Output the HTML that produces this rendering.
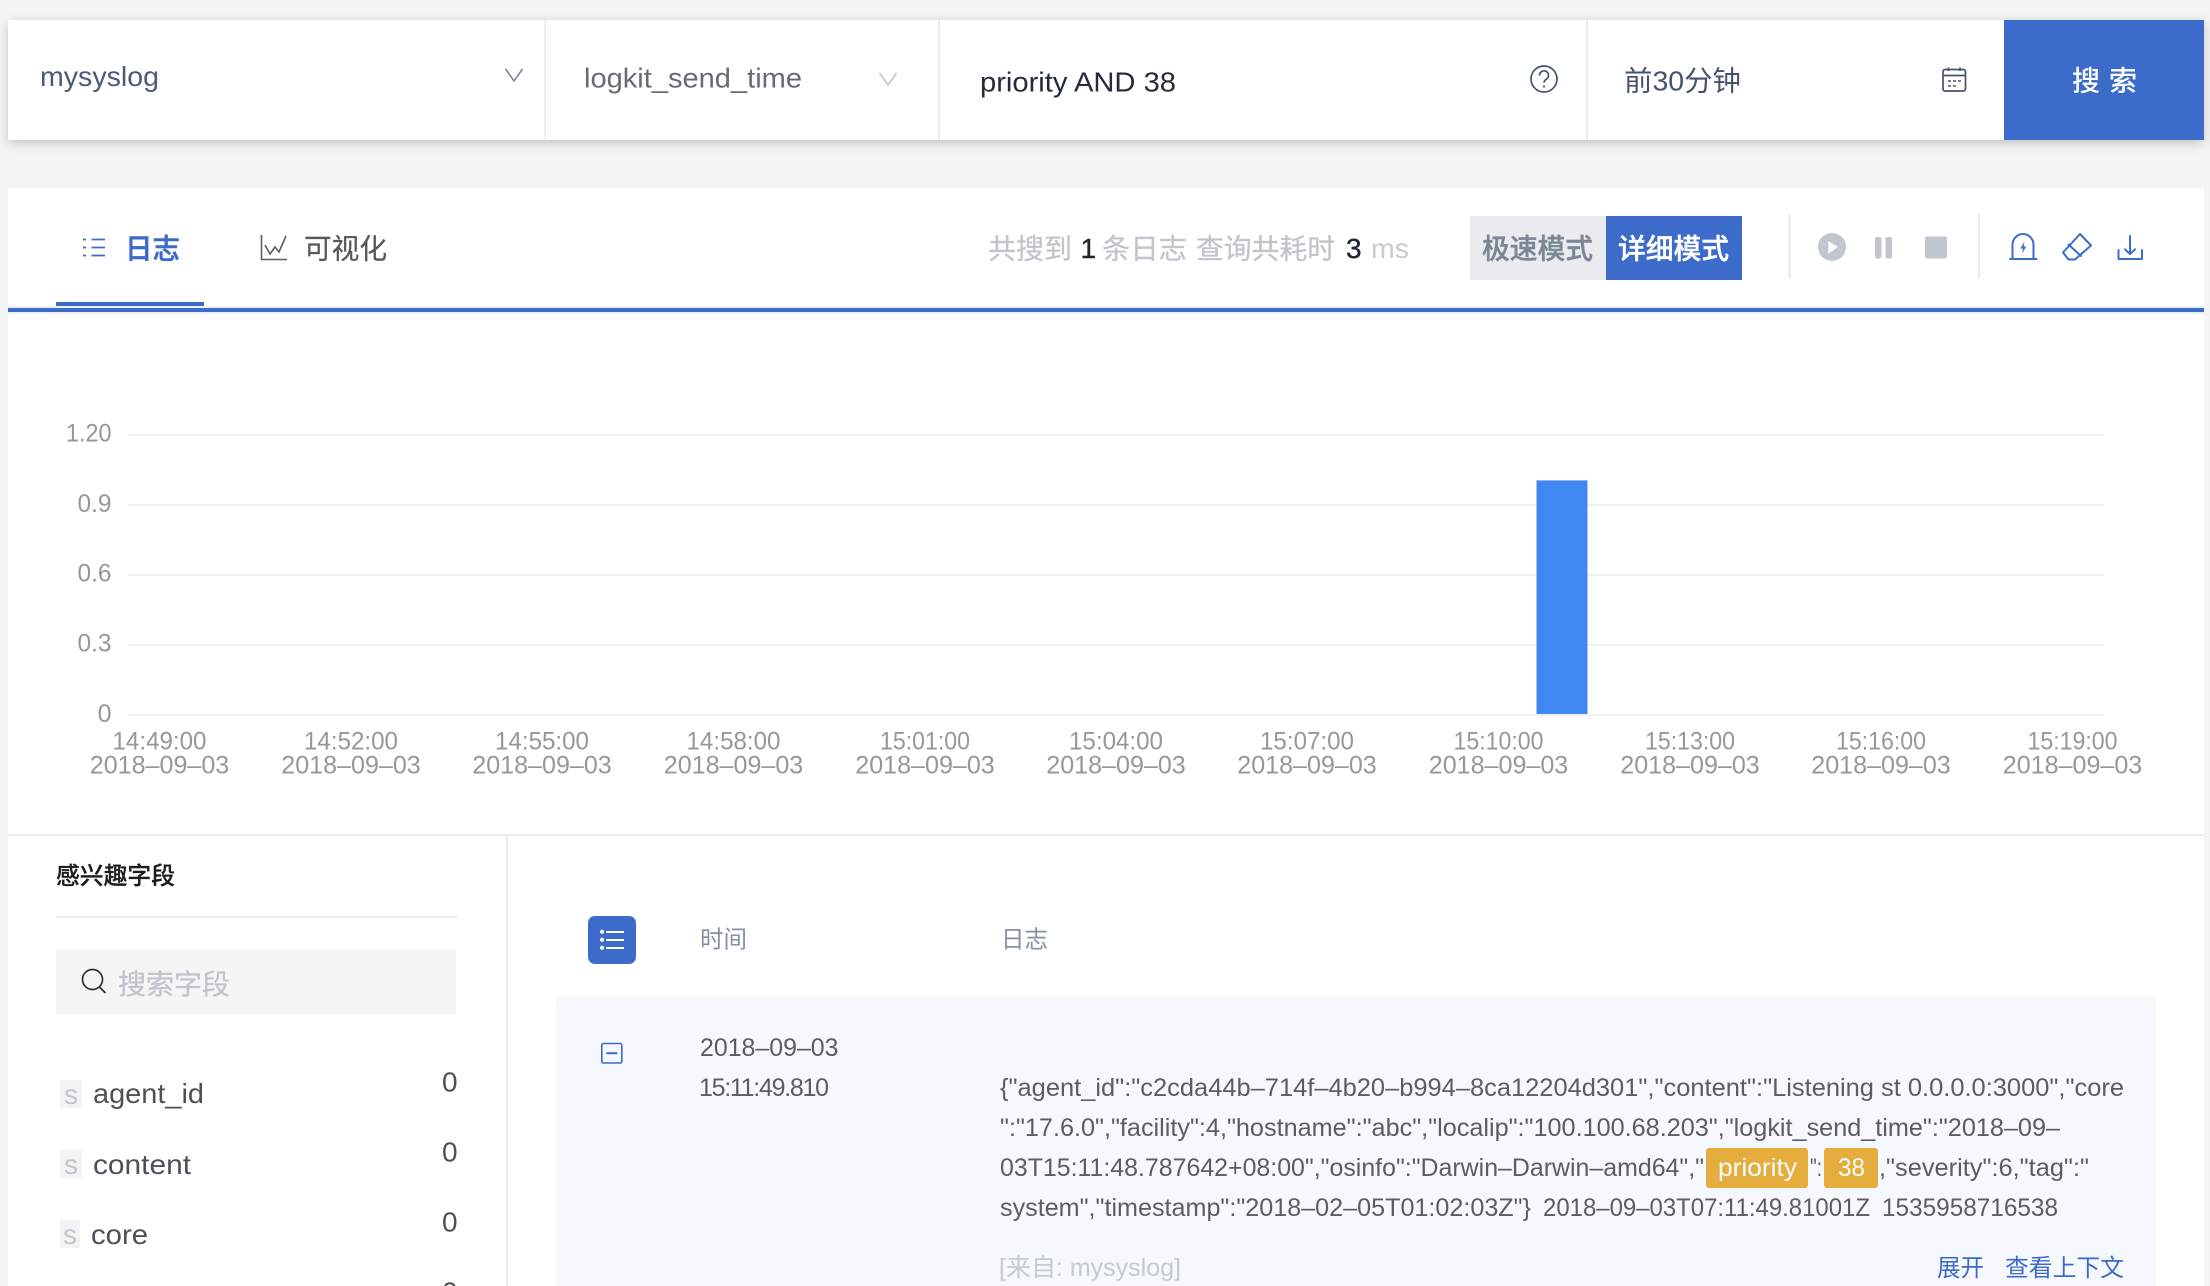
<!DOCTYPE html>
<html lang="zh">
<head>
<meta charset="utf-8">
<title>日志搜索</title>
<style>
html,body{margin:0;padding:0;width:2210px;height:1286px;overflow:hidden;background:#f4f5f7}
svg{display:block;position:absolute;left:0;top:0}
text{font-family:"Liberation Sans","Noto Sans CJK SC",sans-serif;white-space:pre}
.ax{font-size:25px;fill:#979797}
.log{font-size:25px;fill:#5a5d64}
.cn{font-size:28px}
.fld{font-size:28px;fill:#4c5058}
.s{font-size:28px;fill:#c0c5ce}
.ic{fill:none;stroke:#3d6bc9;stroke-width:2;stroke-linecap:round;stroke-linejoin:round}
</style>
</head>
<body>
<svg width="2210" height="1286" viewBox="0 0 2210 1286" xmlns="http://www.w3.org/2000/svg">
<defs>
<filter id="sh" x="-5%" y="-20%" width="110%" height="150%"><feDropShadow dx="0" dy="3" stdDeviation="6" flood-color="#000" flood-opacity=".22"/></filter>
</defs>

<!-- search bar -->
<rect x="8" y="20" width="2196" height="120" fill="#fff" filter="url(#sh)"/>
<rect x="2004" y="20" width="200" height="120" fill="#3d6bc9"/>
<rect x="544.5" y="20" width="1.5" height="120" fill="#e6e8eb"/>
<rect x="938.5" y="20" width="1.5" height="120" fill="#e6e8eb"/>
<rect x="1586.5" y="20" width="1.5" height="120" fill="#e6e8eb"/>

<text x="40" y="86" font-size="28" fill="#4a5a78" textLength="119" lengthAdjust="spacingAndGlyphs">mysyslog</text>
<polyline points="505.5,69 514,81 522.5,69" fill="none" stroke="#7a869a" stroke-width="1.6"/>
<text x="584" y="87.5" font-size="28" fill="#666b75" textLength="218" lengthAdjust="spacingAndGlyphs">logkit_send_time</text>
<polyline points="879.5,73 888,85 896.5,73" fill="none" stroke="#c0c4cc" stroke-width="1.6"/>
<text x="980" y="91.5" font-size="28" fill="#252b3a" textLength="196" lengthAdjust="spacingAndGlyphs">priority AND 38</text>

<circle cx="1544" cy="79" r="13" fill="none" stroke="#45536e" stroke-width="1.7"/>
<path d="M1539.5 75.5a4.5 4.5 0 1 1 7 3.6c-1.6 1.1-2.5 1.9-2.5 3.6" fill="none" stroke="#45536e" stroke-width="1.7"/>
<circle cx="1544" cy="86.5" r="1.1" fill="#45536e"/>

<text x="1624" y="90.5" font-size="28" fill="#45536e" textLength="117" lengthAdjust="spacingAndGlyphs">前30分钟</text>
<g fill="none" stroke="#45536e" stroke-width="1.7">
<rect x="1943" y="69.5" width="22.5" height="21.5" rx="2"/>
<path d="M1943 75.5H1965.5M1948.5 67.5V71M1960 67.5V71"/>
<path d="M1948 81h3M1953 81h3M1958 81h3M1948 86h3M1953 86h3" stroke-width="1.4"/>
</g>
<text x="2072" y="90.6" font-size="28" font-weight="500" fill="#fff" letter-spacing="9">搜索</text>

<!-- main panel -->
<rect x="8" y="188" width="2196" height="1098" fill="#fff"/>
<rect x="8" y="306" width="2196" height="8" fill="#eceef2"/>
<rect x="8" y="308" width="2196" height="4" fill="#3d6bc9"/>
<rect x="56" y="302" width="148" height="4" fill="#3d6bc9"/>

<g fill="none" stroke="#3d6bc9" stroke-width="1.8">
<path d="M83 239.5h3M91.5 239.5H105M83 247.5h3M91.5 247.5H105M83 255.5h3M91.5 255.5H105"/>
</g>
<text x="125" y="258.6" class="cn" font-weight="500" fill="#3d6bc9" stroke="#3d6bc9" stroke-width=".5" textLength="55" lengthAdjust="spacingAndGlyphs">日志</text>
<g fill="none" stroke="#5a5d64" stroke-width="1.6">
<path d="M261.5 235V259.5H287"/>
<polyline points="265,245 270,254 275,247 279,252 286,236"/>
</g>
<text x="304" y="258.6" class="cn" fill="#55585f" stroke="#55585f" stroke-width=".25" textLength="83" lengthAdjust="spacingAndGlyphs">可视化</text>

<text x="988" y="258.6" class="cn" fill="#c0c4cc" stroke="#c0c4cc" stroke-width=".3" textLength="84" lengthAdjust="spacingAndGlyphs">共搜到</text>
<text x="1080.5" y="258" class="cn" fill="#1f2533" stroke="#1f2533" stroke-width=".4">1</text>
<text x="1102" y="258.6" class="cn" fill="#c0c4cc" stroke="#c0c4cc" stroke-width=".3" textLength="85" lengthAdjust="spacingAndGlyphs">条日志</text>
<text x="1196" y="258.6" class="cn" fill="#c0c4cc" stroke="#c0c4cc" stroke-width=".3" textLength="139" lengthAdjust="spacingAndGlyphs">查询共耗时</text>
<text x="1346" y="258" class="cn" fill="#1f2533" stroke="#1f2533" stroke-width=".4">3</text>
<text x="1371" y="258" class="cn" fill="#c6cad1" textLength="38" lengthAdjust="spacingAndGlyphs">ms</text>

<rect x="1470" y="216" width="136" height="64" fill="#e9ebef"/>
<rect x="1606" y="216" width="136" height="64" fill="#3d6bc9"/>
<text x="1482" y="258.6" class="cn" font-weight="500" fill="#7d8694" stroke="#7d8694" stroke-width=".4" textLength="111" lengthAdjust="spacingAndGlyphs">极速模式</text>
<text x="1618" y="258.6" class="cn" font-weight="500" fill="#fff" stroke="#fff" stroke-width=".4" textLength="111" lengthAdjust="spacingAndGlyphs">详细模式</text>

<rect x="1788.5" y="214" width="2" height="64" fill="#e8e9ec"/>
<rect x="1978" y="214" width="2" height="64" fill="#e8e9ec"/>
<circle cx="1832" cy="247" r="14" fill="#c0c5ce"/>
<polygon points="1828.3,241 1838,247 1828.3,253.5" fill="#fff"/>
<rect x="1875" y="237" width="6.5" height="21.5" rx="2" fill="#c0c5ce"/>
<rect x="1885.5" y="237" width="6.5" height="21.5" rx="2" fill="#c0c5ce"/>
<rect x="1925" y="236.5" width="22" height="22" rx="2" fill="#c0c5ce"/>

<g class="ic">
<path d="M2012.5 259V245a10.5 11 0 0 1 21 0V259"/>
<path d="M2010 259H2036.5"/>
<path d="M2080 234L2091 245.5L2075 259.5H2068.5L2063 252.5Z"/>
<path d="M2068.5 244.5L2081 256"/>
<path d="M2130 236V254M2125 249.3L2130 254L2135 249.3"/>
<path d="M2118.5 250V259H2142V250"/>
</g>
<polygon points="2024.5,241.5 2020.3,248.5 2023,248.5 2022,253.5 2026.3,246.5 2023.6,246.5" fill="#3d6bc9"/>

<!-- chart -->
<g fill="#eff0f2">
<rect x="128" y="434" width="1976" height="2"/>
<rect x="128" y="504" width="1976" height="2"/>
<rect x="128" y="574" width="1976" height="2"/>
<rect x="128" y="644" width="1976" height="2"/>
<rect x="128" y="714" width="1976" height="2"/>
</g>
<rect x="1536.5" y="481" width="51" height="233" fill="#4087f1"/>
<rect x="1536.5" y="480" width="51" height="1" fill="#8fb9f6"/>
<g text-anchor="end" class="ax">
<text x="111.5" y="441.5" textLength="45.5" lengthAdjust="spacingAndGlyphs">1.20</text>
<text x="111.5" y="512" textLength="34" lengthAdjust="spacingAndGlyphs">0.9</text>
<text x="111.5" y="581.5" textLength="34" lengthAdjust="spacingAndGlyphs">0.6</text>
<text x="111.5" y="651.5" textLength="34" lengthAdjust="spacingAndGlyphs">0.3</text>
<text x="111.5" y="722">0</text>
</g>
<g text-anchor="middle" class="ax">
<text x="159.5" y="749.5" textLength="94" lengthAdjust="spacingAndGlyphs">14:49:00</text><text x="159.5" y="773.5" textLength="139.5" lengthAdjust="spacingAndGlyphs">2018–09–03</text>
<text x="351" y="749.5" textLength="94" lengthAdjust="spacingAndGlyphs">14:52:00</text><text x="351" y="773.5" textLength="139.5" lengthAdjust="spacingAndGlyphs">2018–09–03</text>
<text x="542" y="749.5" textLength="94" lengthAdjust="spacingAndGlyphs">14:55:00</text><text x="542" y="773.5" textLength="139.5" lengthAdjust="spacingAndGlyphs">2018–09–03</text>
<text x="733.5" y="749.5" textLength="94" lengthAdjust="spacingAndGlyphs">14:58:00</text><text x="733.5" y="773.5" textLength="139.5" lengthAdjust="spacingAndGlyphs">2018–09–03</text>
<text x="925" y="749.5" textLength="90" lengthAdjust="spacingAndGlyphs">15:01:00</text><text x="925" y="773.5" textLength="139.5" lengthAdjust="spacingAndGlyphs">2018–09–03</text>
<text x="1116" y="749.5" textLength="94" lengthAdjust="spacingAndGlyphs">15:04:00</text><text x="1116" y="773.5" textLength="139.5" lengthAdjust="spacingAndGlyphs">2018–09–03</text>
<text x="1307" y="749.5" textLength="94" lengthAdjust="spacingAndGlyphs">15:07:00</text><text x="1307" y="773.5" textLength="139.5" lengthAdjust="spacingAndGlyphs">2018–09–03</text>
<text x="1498.5" y="749.5" textLength="90" lengthAdjust="spacingAndGlyphs">15:10:00</text><text x="1498.5" y="773.5" textLength="139.5" lengthAdjust="spacingAndGlyphs">2018–09–03</text>
<text x="1690" y="749.5" textLength="90" lengthAdjust="spacingAndGlyphs">15:13:00</text><text x="1690" y="773.5" textLength="139.5" lengthAdjust="spacingAndGlyphs">2018–09–03</text>
<text x="1881" y="749.5" textLength="90" lengthAdjust="spacingAndGlyphs">15:16:00</text><text x="1881" y="773.5" textLength="139.5" lengthAdjust="spacingAndGlyphs">2018–09–03</text>
<text x="2072.5" y="749.5" textLength="90" lengthAdjust="spacingAndGlyphs">15:19:00</text><text x="2072.5" y="773.5" textLength="139.5" lengthAdjust="spacingAndGlyphs">2018–09–03</text>
</g>

<rect x="8" y="834" width="2196" height="2" fill="#ecedf1"/>
<rect x="506" y="836" width="2" height="450" fill="#ecedf1"/>

<!-- sidebar -->
<text x="56" y="884" font-size="24" font-weight="500" fill="#1c1d20" stroke="#1c1d20" stroke-width=".25" textLength="119" lengthAdjust="spacingAndGlyphs">感兴趣字段</text>
<rect x="56" y="916" width="402" height="2" fill="#eceef1"/>
<rect x="56" y="950" width="400" height="64" fill="#f4f5f7"/>
<circle cx="92.5" cy="979.5" r="10" fill="none" stroke="#2a2f3a" stroke-width="1.7"/>
<path d="M99.5 987L105.5 993" fill="none" stroke="#2a2f3a" stroke-width="1.7"/>
<text x="118" y="994" class="cn" fill="#c0c4cc" stroke="#c0c4cc" stroke-width=".3" textLength="112" lengthAdjust="spacingAndGlyphs">搜索字段</text>

<rect x="60" y="1080" width="22" height="28" fill="#f2f3f5"/>
<text x="64" y="1104" class="s">s</text>
<text x="93" y="1103" class="fld" textLength="111" lengthAdjust="spacingAndGlyphs">agent_id</text>
<text x="442" y="1091.5" class="fld">0</text>
<rect x="60" y="1150" width="22" height="28" fill="#f2f3f5"/>
<text x="64" y="1174" class="s">s</text>
<text x="93" y="1174" class="fld" textLength="98" lengthAdjust="spacingAndGlyphs">content</text>
<text x="442" y="1161.5" class="fld">0</text>
<rect x="60" y="1220" width="20" height="28" fill="#f2f3f5"/>
<text x="63" y="1244" class="s">s</text>
<text x="91" y="1244" class="fld" textLength="57" lengthAdjust="spacingAndGlyphs">core</text>
<text x="442" y="1231.5" class="fld">0</text>
<text x="442" y="1301.5" class="fld">0</text>

<!-- table header -->
<rect x="588" y="916" width="48" height="48" rx="7" fill="#3d6bc9"/>
<g fill="#fff"><circle cx="602" cy="931.8" r="2"/><circle cx="602" cy="939.8" r="2"/><circle cx="602" cy="947.8" r="2"/></g>
<path d="M606 932H624M606 940H624M606 948H624" fill="none" stroke="#fff" stroke-width="2"/>
<text x="700" y="947.5" font-size="24" fill="#8590a0" textLength="47" lengthAdjust="spacingAndGlyphs">时间</text>
<text x="1001" y="947.5" font-size="24" fill="#8590a0" textLength="47" lengthAdjust="spacingAndGlyphs">日志</text>

<!-- log row -->
<rect x="556" y="996" width="1600" height="290" fill="#f5f8fd"/>
<rect x="601.8" y="1043.5" width="20" height="19.5" rx="1.5" fill="none" stroke="#3d6bc9" stroke-width="1.6"/>
<path d="M606.3 1053.2H617.3" fill="none" stroke="#3d6bc9" stroke-width="2"/>
<text x="700" y="1056" class="log" textLength="138.5" lengthAdjust="spacingAndGlyphs">2018–09–03</text>
<text x="699" y="1096" class="log" textLength="130" lengthAdjust="spacing">15:11:49.810</text>

<text x="1000" y="1096" class="log" textLength="1124" lengthAdjust="spacingAndGlyphs">{"agent_id":"c2cda44b–714f–4b20–b994–8ca12204d301","content":"Listening st 0.0.0.0:3000","core</text>
<text x="1000" y="1136" class="log" textLength="1060" lengthAdjust="spacingAndGlyphs">":"17.6.0","facility":4,"hostname":"abc","localip":"100.100.68.203","logkit_send_time":"2018–09–</text>
<text x="1000" y="1176" class="log" textLength="704" lengthAdjust="spacingAndGlyphs">03T15:11:48.787642+08:00","osinfo":"Darwin–Darwin–amd64","</text>
<rect x="1706" y="1148" width="102" height="40" rx="3" fill="#e5ac3e"/>
<text x="1718" y="1176" font-size="25" fill="#fff" textLength="79" lengthAdjust="spacingAndGlyphs">priority</text>
<text x="1810" y="1176" class="log" textLength="12" lengthAdjust="spacingAndGlyphs">":</text>
<rect x="1824" y="1148" width="54" height="40" rx="3" fill="#e5ac3e"/>
<text x="1838" y="1176" font-size="25" fill="#fff" textLength="27" lengthAdjust="spacingAndGlyphs">38</text>
<text x="1879" y="1176" class="log" textLength="210" lengthAdjust="spacingAndGlyphs">,"severity":6,"tag":"</text>
<text x="1000" y="1216" class="log" textLength="531" lengthAdjust="spacingAndGlyphs">system","timestamp":"2018–02–05T01:02:03Z"}</text>
<text x="1543" y="1216" class="log" textLength="327" lengthAdjust="spacingAndGlyphs">2018–09–03T07:11:49.81001Z</text>
<text x="1882" y="1216" class="log" textLength="176" lengthAdjust="spacingAndGlyphs">1535958716538</text>

<text x="999" y="1276" font-size="25" fill="#c6cad1" textLength="182" lengthAdjust="spacingAndGlyphs">[来自: mysyslog]</text>
<text x="1937" y="1276" font-size="24" fill="#3d6bc9" textLength="47" lengthAdjust="spacingAndGlyphs">展开</text>
<text x="2005" y="1276" font-size="24" fill="#3d6bc9" textLength="119" lengthAdjust="spacingAndGlyphs">查看上下文</text>
</svg>
</body>
</html>
